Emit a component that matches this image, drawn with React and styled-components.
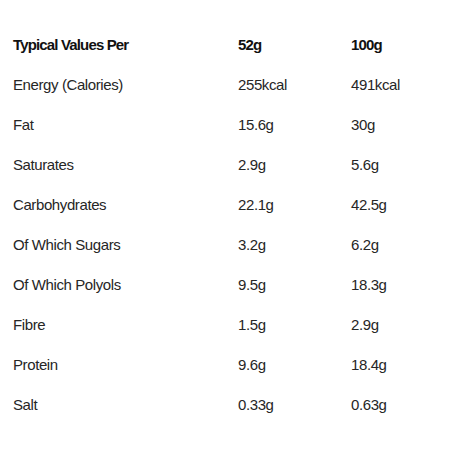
import React from 'react';
import styled, { createGlobalStyle } from 'styled-components';

const GlobalStyle = createGlobalStyle`
  body {
    margin: 0;
    background: #fff;
    font-family: "Liberation Sans Narrow", "Liberation Sans", Arial, sans-serif;
    color: #222;
  }
`;

const Wrapper = styled.div`
  padding: 24px 13px 0 13px;
`;

const Table = styled.div`
  display: grid;
  grid-template-columns: 225px 113px 1fr;
`;

const Cell = styled.div`
  height: 40px;
  display: flex;
  align-items: center;
  font-size: 15px;
  font-weight: ${p => (p.$head ? 700 : 400)};
  letter-spacing: ${p => (p.$head ? '-0.85px' : '-0.4px')};
  color: ${p => (p.$head ? '#111' : '#262626')};
`;

const rows = [
  ['Energy (Calories)', '255kcal', '491kcal'],
  ['Fat', '15.6g', '30g'],
  ['Saturates', '2.9g', '5.6g'],
  ['Carbohydrates', '22.1g', '42.5g'],
  ['Of Which Sugars', '3.2g', '6.2g'],
  ['Of Which Polyols', '9.5g', '18.3g'],
  ['Fibre', '1.5g', '2.9g'],
  ['Protein', '9.6g', '18.4g'],
  ['Salt', '0.33g', '0.63g'],
];

export default function App() {
  return (
    <>
      <GlobalStyle />
      <Wrapper>
        <Table>
          <Cell $head>Typical Values Per</Cell>
          <Cell $head>52g</Cell>
          <Cell $head>100g</Cell>
          {rows.map(r => r.map((v, i) => <Cell key={r[0] + i}>{v}</Cell>))}
        </Table>
      </Wrapper>
    </>
  );
}
